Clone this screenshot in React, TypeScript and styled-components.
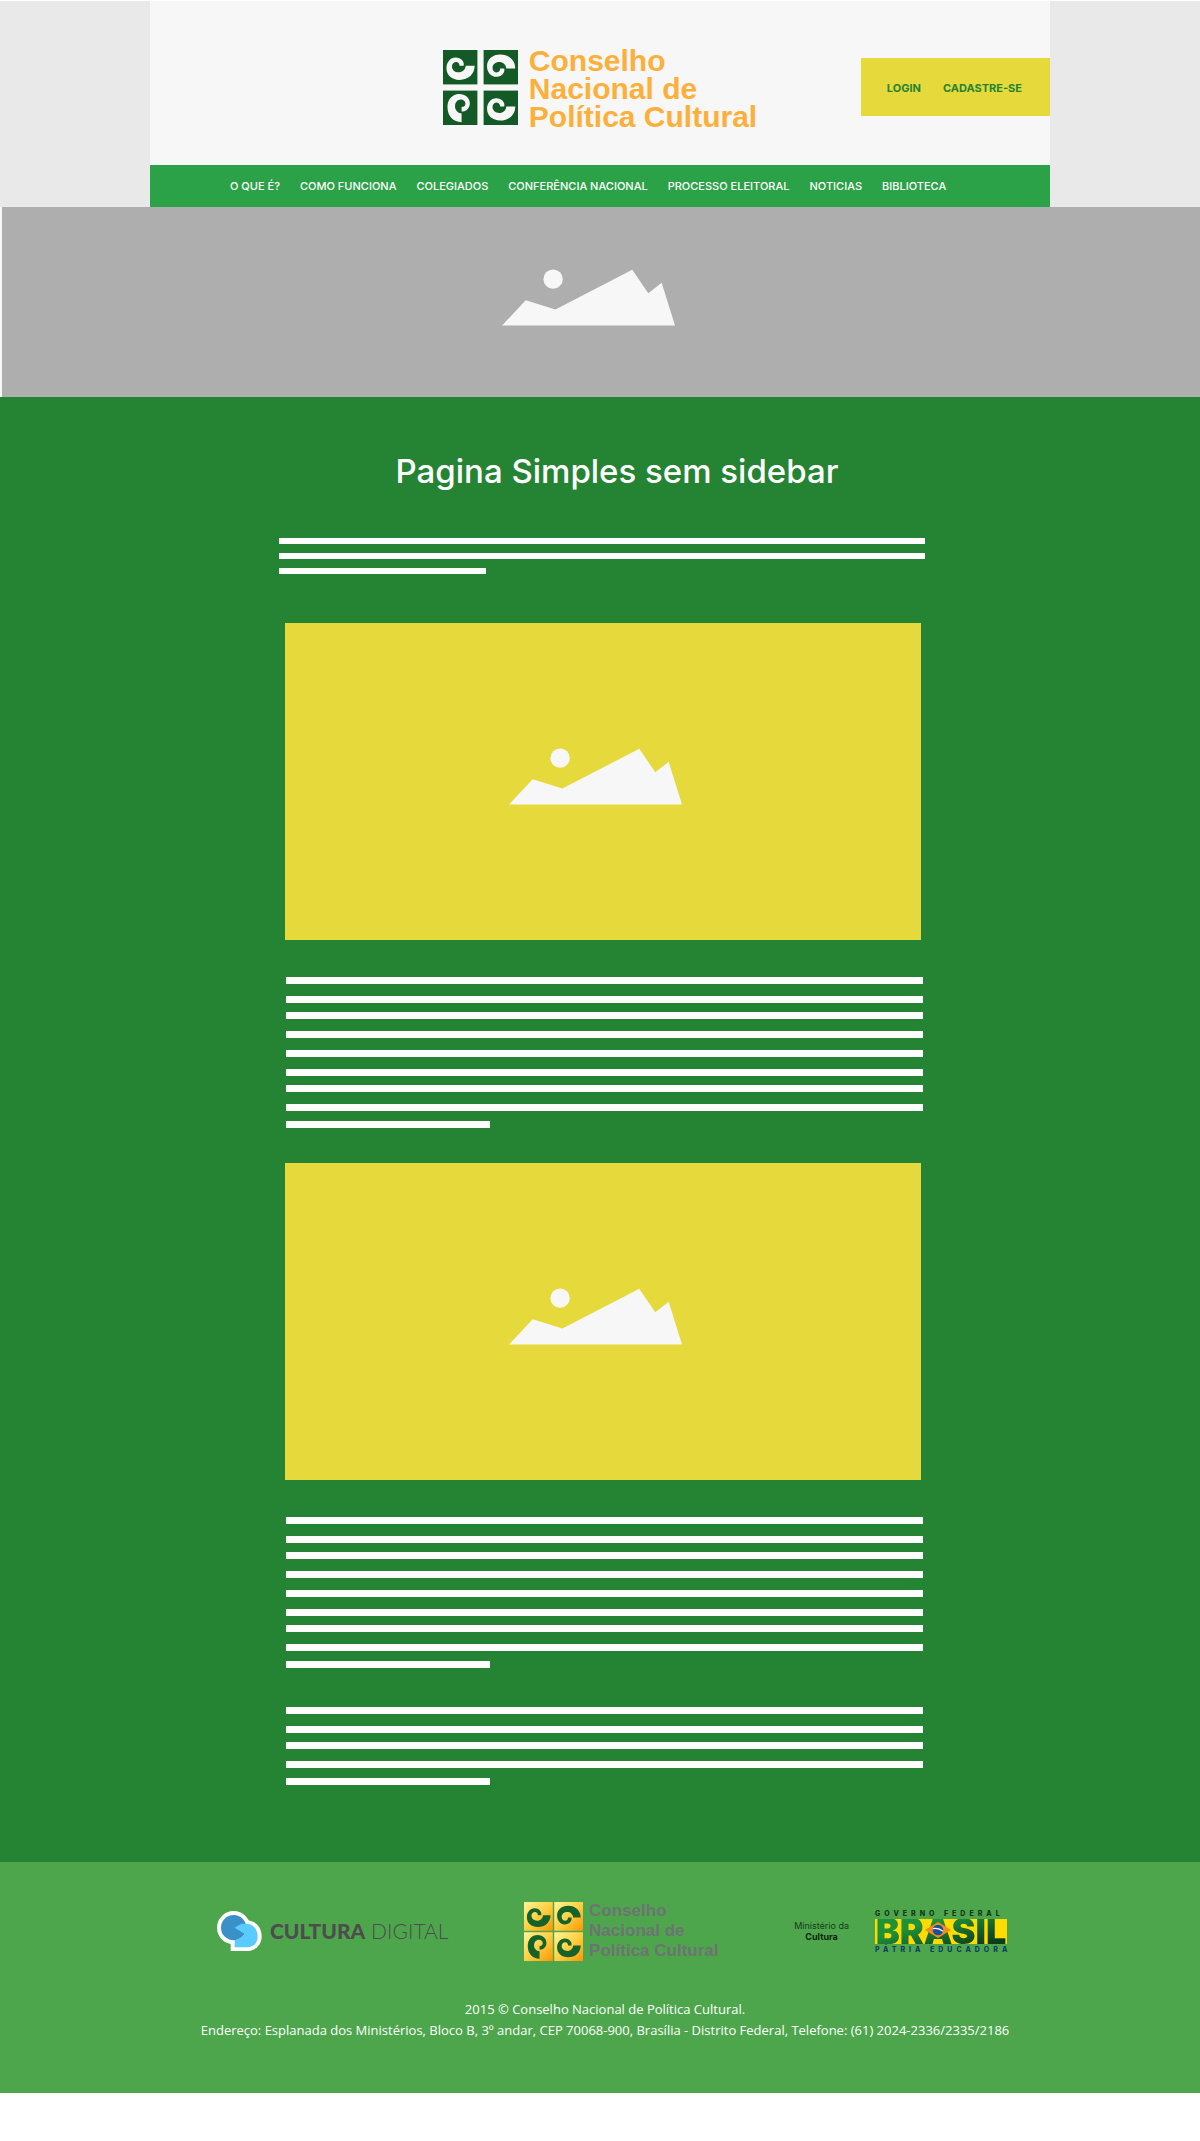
import React from "react";
import styled, { createGlobalStyle, css } from "styled-components";

const color = {
  green: "#258433",
  nav: "#2ba148",
  footer: "#4da64c",
  yellow: "#e5d93b",
  paper: "#f7f7f7",
  side: "#e9e9e9",
  grey: "#aeaeae",
};

const GlobalStyle = createGlobalStyle`
  * { box-sizing: border-box; }
  body {
    margin: 0;
    background: #fff;
    color: #fff;
    font-family: Inter, "Open Sans", sans-serif;
  }
  h1, p, ul, figure { margin: 0; padding: 0; }
  a { color: inherit; text-decoration: none; }
`;

/* ---------- header ---------- */

const Top = styled.header`
  background: ${color.side};
  border-top: 1px solid #fff;
`;

const TopInner = styled.div`
  width: 75%;
  margin: 0 auto;
  background: ${color.paper};
`;

const BrandBar = styled.div`
  display: grid;
  grid-template-columns: 1fr auto 1fr;
  align-items: center;
  min-height: 164px;
  padding-top: 8px;
`;

const BrandName = styled.span``;

const Brand = styled.a<{ $small?: boolean }>`
  display: flex;
  align-items: center;
  grid-column: 2;
  gap: ${(p) => (p.$small ? 6 : 11)}px;
  color: ${(p) => (p.$small ? "#6d7373" : "#fbb03b")};
  font: 700 ${(p) => (p.$small ? "17px/20px" : "30px/28px")} "Liberation Sans", Arial, sans-serif;
  white-space: nowrap;

  ${BrandName} {
    padding-top: ${(p) => (p.$small ? 0 : 4)}px;
  }
`;

const Access = styled.div`
  grid-column: 3;
  justify-self: end;
  display: flex;
  align-items: center;
  gap: 22px;
  height: 58px;
  padding: 2px 28px 0 26px;
  background: ${color.yellow};
  color: ${color.green};
  font-size: 11px;
  font-weight: 700;
`;

const Nav = styled.nav`
  background: ${color.nav};
  min-height: 42px;
  padding: 0 16px 0 80px;
  display: flex;
  align-items: center;
`;

const NavList = styled.ul`
  display: flex;
  gap: 20px;
  list-style: none;
  font-size: 11px;
  font-weight: 500;
  line-height: 16px;
  white-space: nowrap;
`;

/* ---------- content ---------- */

const placeholder = css`
  display: flex;
  align-items: center;
  justify-content: center;
`;

const Banner = styled.div`
  ${placeholder}
  height: 190px;
  padding: 0 26px 10px 0;
  background: ${color.grey};
  border-left: 2px solid ${color.paper};
`;

const Main = styled.main`
  background: ${color.green};
  padding: 54px 0 77px 4px;
`;

const Column = styled.article`
  width: 100%;
  max-width: 646px;
  margin: 0 auto;
`;

const Title = styled.h1`
  padding-left: 30px;
  margin-bottom: 47px;
  text-align: center;
  font-size: 33px;
  font-weight: 500;
  line-height: 40px;
`;

const Lines = styled.div<{ $inset?: boolean }>`
  display: flex;
  flex-direction: column;
  padding: ${(p) => (p.$inset ? "0 2px 0 7px" : "0")};
`;

const Line = styled.span<{ $thin?: boolean; $after: number; $short?: boolean }>`
  height: ${(p) => (p.$thin ? 6 : 7)}px;
  width: ${(p) => (p.$short ? "32%" : "100%")};
  margin-bottom: ${(p) => p.$after}px;
  background: #fff;
`;

const Figure = styled.figure`
  ${placeholder}
  && { margin: 0 4px 37px 6px; }
  aspect-ratio: 636 / 317;
  padding: 0 16px 10px 0;
  background: ${color.yellow};
`;

const Peaks = styled.svg`
  width: 173px;
  height: 57px;
  fill: ${color.paper};
`;

/* ---------- footer ---------- */

const Foot = styled.footer`
  background: ${color.footer};
  padding: 39px 0 52px 10px;
`;

const Sponsors = styled.div`
  display: flex;
  align-items: center;
  justify-content: space-between;
  max-width: 804px;
  margin: 0 auto 38px;
  padding-left: 14px;
`;

const Digital = styled.a`
  display: flex;
  align-items: center;
  gap: 8px;
  color: #4d4d4d;
  font: 300 21px/28px Lato, sans-serif;
  white-space: nowrap;
  b { font-weight: 900; }
`;

const Government = styled.div`
  display: flex;
  align-items: center;
  gap: 26px;
`;

const Ministry = styled.p`
  color: #173a1c;
  font-size: 9px;
  line-height: 11px;
  text-align: center;
  b { display: block; color: #0d1f10; }
`;

const Brasil = styled.div`
  display: flex;
  flex-direction: column;
  gap: 1px;
  width: 132px;
`;

const Tag = styled.span<{ $blue?: boolean }>`
  color: ${(p) => (p.$blue ? "#0f3f66" : "#123618")};
  font-size: 7px;
  font-weight: 800;
  line-height: 9px;
  letter-spacing: 4px;
  white-space: nowrap;
`;

const WordBox = styled.div`
  position: relative;
  display: flex;
  justify-content: center;
  background: #ffdb00;
  height: 25px;
`;

const Word = styled.span`
  font-size: 36px;
  font-weight: 900;
  line-height: 25px;
  color: transparent;
  background: linear-gradient(165deg, #1f9139 30%, #0c3d1c 90%);
  background-clip: text;
  -webkit-background-clip: text;
`;

const Flag = styled.svg`
  position: absolute;
  left: 50px;
  top: 3px;
  width: 26px;
  height: 16px;
`;

const Legal = styled.p`
  font: 400 13px/21px "Open Sans", "Noto Sans", sans-serif;
  text-align: center;
`;

/* ---------- drawings ---------- */

const SWIRL =
  "M92 46H66C65 58 56 65 46 65C34 65 26 58 26 48C26 39 33 34 40 35C46 36 48 41 48 46H60C63 34 52 22 37 22C21 22 10 36 10 53C10 73 26 87 48 87C74 87 92 70 92 46Z";

const TILES = [
  { at: [0, 0], turn: undefined },
  { at: [1, 0], turn: "matrix(1 0 0 -1 0 100)" },
  { at: [0, 1], turn: "matrix(0 1 -1 0 100 0)" },
  { at: [1, 1], turn: undefined },
] as const;

function Tiles({ gold }: { gold?: boolean }) {
  const step = gold ? 105 : 118;
  const size = 100 + step;
  const px = gold ? 59 : 75;
  return (
    <svg width={px} height={px} viewBox={`0 0 ${size} ${size}`} aria-hidden="true">
      <defs>
        <linearGradient id="gold" x1="0" y1="0" x2="1" y2="1">
          <stop offset="0" stopColor="#fff59a" />
          <stop offset="0.5" stopColor="#ffd044" />
          <stop offset="1" stopColor="#ff9500" />
        </linearGradient>
      </defs>
      {TILES.map(({ at, turn }) => (
        <g key={at.join()} transform={`translate(${at[0] * step} ${at[1] * step})`}>
          <rect width="100" height="100" fill={gold ? "url(#gold)" : "#145a26"} />
          <path d={SWIRL} transform={turn} fill={gold ? "#14632a" : "#f7f7f7"} />
        </g>
      ))}
    </svg>
  );
}

function Mountains() {
  return (
    <Peaks viewBox="0 0 518 170" aria-hidden="true">
      <circle cx="153" cy="30" r="29" />
      <path d="M0 169L71 93L160 121L390 2L438 72L478 41L518 169Z" />
    </Peaks>
  );
}

function Bubbles() {
  return (
    <svg width="45" height="40" viewBox="0 0 135 120" aria-hidden="true">
      <circle cx="50" cy="50" r="50" fill="#fff" />
      <path d="M41 70L88 28C116 28 134 50 134 76C134 103 114 120 90 120H41Z" fill="#fff" />
      <circle cx="50" cy="50" r="38" fill="#3a90c8" />
      <path
        d="M53 50L70 40C76 37 84 39 92 39C111 40 122 58 122 77C122 97 108 109 90 109H53V88C66 86 76 80 83 69Z"
        fill="#5acbff"
      />
    </svg>
  );
}

const WIDE = 12;
const TIGHT = 9;
const LAST = 10;

function TextBlock({ gaps, end }: { gaps: number[]; end: number }) {
  return (
    <Lines $inset>
      {gaps.map((gap, i) => (
        <Line key={i} $after={gap} />
      ))}
      <Line $short $after={end} />
    </Lines>
  );
}

const LONG = [WIDE, TIGHT, WIDE, WIDE, WIDE, TIGHT, WIDE, LAST];
const BRIEF = [WIDE, TIGHT, WIDE, LAST];

const MENU = [
  "O QUE É?",
  "COMO FUNCIONA",
  "COLEGIADOS",
  "CONFERÊNCIA NACIONAL",
  "PROCESSO ELEITORAL",
  "NOTICIAS",
  "BIBLIOTECA",
];

const CouncilName = () => (
  <BrandName>
    Conselho
    <br />
    Nacional de
    <br />
    Política Cultural
  </BrandName>
);

export default function App() {
  return (
    <>
      <GlobalStyle />
      <Top>
        <TopInner>
          <BrandBar>
            <Brand href="#">
              <Tiles />
              <CouncilName />
            </Brand>
            <Access>
              <a href="#login">LOGIN</a>
              <a href="#cadastro">CADASTRE-SE</a>
            </Access>
          </BrandBar>
          <Nav>
            <NavList>
              {MENU.map((item) => (
                <li key={item}>
                  <a href="#">{item}</a>
                </li>
              ))}
            </NavList>
          </Nav>
        </TopInner>
      </Top>
      <Banner>
        <Mountains />
      </Banner>
      <Main>
        <Column>
          <Title>Pagina Simples sem sidebar</Title>
          <Lines>
            <Line $thin $after={9} />
            <Line $thin $after={9} />
            <Line $thin $short $after={49} />
          </Lines>
          <Figure>
            <Mountains />
          </Figure>
          <TextBlock gaps={LONG} end={35} />
          <Figure>
            <Mountains />
          </Figure>
          <TextBlock gaps={LONG} end={39} />
          <TextBlock gaps={BRIEF} end={0} />
        </Column>
      </Main>
      <Foot>
        <Sponsors>
          <Digital href="#">
            <Bubbles />
            <span>
              <b>CULTURA</b> DIGITAL
            </span>
          </Digital>
          <Brand $small href="#">
            <Tiles gold />
            <CouncilName />
          </Brand>
          <Government>
            <Ministry>
              Ministério da <b>Cultura</b>
            </Ministry>
            <Brasil>
              <Tag>GOVERNO FEDERAL</Tag>
              <WordBox>
                <Word>BRASIL</Word>
                <Flag viewBox="0 0 78 48" aria-hidden="true">
                  <path d="M0 24L39 0L78 24L39 48Z" fill="#f58a1f" />
                  <circle cx="39" cy="24" r="16" fill="#1b4f9c" />
                  <path d="M24 20Q40 16 54 28" fill="none" stroke="#fff" strokeWidth="4" />
                </Flag>
              </WordBox>
              <Tag $blue>PÁTRIA EDUCADORA</Tag>
            </Brasil>
          </Government>
        </Sponsors>
        <Legal>2015 © Conselho Nacional de Política Cultural.</Legal>
        <Legal>
          Endereço: Esplanada dos Ministérios, Bloco B, 3º andar, CEP 70068-900, Brasília - Distrito
          Federal, Telefone: (61) 2024-2336/2335/2186
        </Legal>
      </Foot>
    </>
  );
}
